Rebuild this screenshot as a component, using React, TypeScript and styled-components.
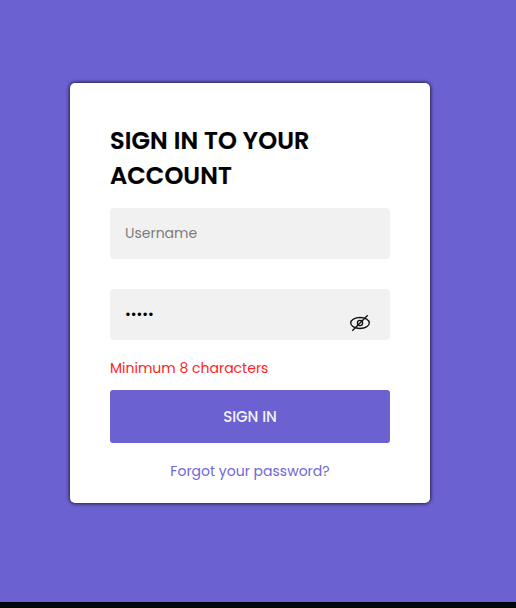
import React, { useState } from "react";
import styled, { createGlobalStyle } from "styled-components";

const GlobalStyle = createGlobalStyle`
  * { box-sizing: border-box; }
  body { margin: 0; background: #6b61d1; font-family: Poppins, Inter, sans-serif; }
`;

const Page = styled.main`
  height: 608px;
  padding: 83px 86px 0 70px;
  background: #6b61d1;
  border-bottom: 6px solid #02080c;
`;

const Card = styled.form`
  display: flex;
  flex-direction: column;
  width: 360px;
  height: 420px;
  padding: 40px;
  background: #fff;
  border-radius: 5px;
  box-shadow: 0 0 4px #000;
`;

const Title = styled.h1`
  margin: 0 0 15px;
  font-size: 24px;
  line-height: 35px;
  font-weight: 600;
  letter-spacing: 0.12px;
  color: #000;
  -webkit-text-stroke: 0.2px #000;
`;

const Field = styled.div<{ $gap: number }>`
  display: flex;
  height: 51px;
  flex: none;
  margin-bottom: ${(p) => p.$gap}px;
  padding: 0 20px 0 15px;
  background: #f1f1f1;
  border-radius: 4px;
`;

const Input = styled.input`
  flex: 1;
  min-width: 0;
  padding: 0;
  border: 0;
  outline: 0;
  background: transparent;
  color: #000;
  font-family: Poppins, Inter, sans-serif;
  font-size: 14px;
  &::placeholder { color: #7c7c7c; opacity: 1; }
`;

const Toggle = styled.button`
  display: flex;
  align-self: flex-end;
  margin-bottom: 7px;
  padding: 0;
  border: 0;
  background: none;
  color: #111;
`;

const ErrorText = styled.p`
  margin: 0 0 11px;
  font-size: 14px;
  line-height: 21px;
  color: #ff2222;
`;

const Submit = styled.button`
  flex: none;
  height: 53px;
  padding: 0;
  border: 0;
  border-radius: 3px;
  background: #6b61d1;
  color: #f4f2fc;
  font-family: Poppins, Inter, sans-serif;
  font-size: 15px;
  font-weight: 500;
  letter-spacing: -0.1px;
`;

const Forgot = styled.a`
  align-self: center;
  margin-top: 18px;
  font-size: 14px;
  line-height: 21px;
  color: #7067d6;
  text-decoration: none;
`;

const EyeOff = () => (
  <svg width="20" height="20" viewBox="0 0 20 20" fill="none" stroke="currentColor" strokeWidth="1.3">
    <path d="M.7 10C.7 6.900 4.800 4.500 10 4.500s9.300 2.400 9.300 5.500-4.100 5.500-9.300 5.500S.7 13.100.7 10Z" />
    <circle cx="10" cy="10" r="2.600" />
    <path d="M2.300 17.800 17.700 2.200" />
  </svg>
);

export default function App() {
  const [name, setName] = useState("");
  const [password, setPassword] = useState("12345");
  const [visible, setVisible] = useState(false);
  return (
    <>
      <GlobalStyle />
      <Page>
        <Card onSubmit={(e) => e.preventDefault()}>
          <Title>SIGN IN TO YOUR ACCOUNT</Title>
          <Field $gap={30}>
            <Input placeholder="Username" value={name} onChange={(e) => setName(e.target.value)} />
          </Field>
          <Field $gap={18}>
            <Input
              type={visible ? "text" : "password"}
              value={password}
              onChange={(e) => setPassword(e.target.value)}
            />
            <Toggle type="button" aria-label="Toggle password visibility" onClick={() => setVisible(!visible)}>
              <EyeOff />
            </Toggle>
          </Field>
          <ErrorText>Minimum 8 characters</ErrorText>
          <Submit type="submit">SIGN IN</Submit>
          <Forgot href="#">Forgot your password?</Forgot>
        </Card>
      </Page>
    </>
  );
}
